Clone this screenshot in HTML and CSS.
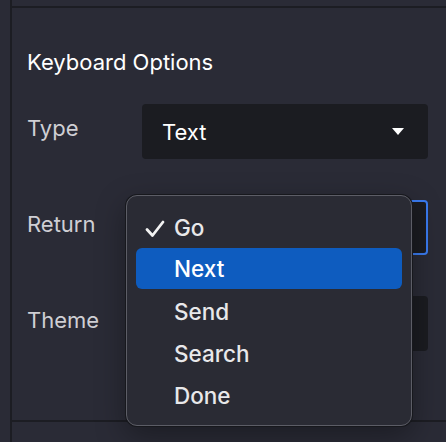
FILE: index.html
```html
<!DOCTYPE html>
<html>
<head>
<meta charset="utf-8">
<link rel="stylesheet" href="styles.css">
</head>
<body>
<div class="frame">
  <section class="panel">
    <h2 class="title">Keyboard Options</h2>
    <div class="form">
      <div class="label">Type</div>
      <div class="select">
        <span class="value">Text</span>
        <span class="caret"></span>
      </div>
      <div class="label">Return</div>
      <div class="select focused"></div>
      <div class="label">Theme</div>
      <div class="select"></div>
    </div>
  </section>
</div>
<div class="menu">
  <div class="item checked">
    <svg class="check" viewBox="0 0 20 18" width="20" height="18"><path d="M2 9.5 L7.5 15.5 L18 2" fill="none" stroke="#f2f2f2" stroke-width="2.8" stroke-linecap="round" stroke-linejoin="round"/></svg>
    <span>Go</span>
  </div>
  <div class="item active"><span>Next</span></div>
  <div class="item"><span>Send</span></div>
  <div class="item"><span>Search</span></div>
  <div class="item"><span>Done</span></div>
</div>
</body>
</html>
```
FILE: styles.css
```css
html, body {
  margin: 0;
  padding: 0;
  height: 100%;
}
body {
  background: #2a2b36;
  font-family: Inter, "Noto Sans", sans-serif;
  overflow: hidden;
  position: relative;
}
.frame {
  margin-left: 10px;
  padding-top: 6px;
  border-left: 2px solid #1c1d23;
  height: 100%;
  box-sizing: border-box;
}
.panel {
  border-top: 2px solid #1c1d23;
  border-bottom: 2px solid #1c1d23;
  height: 416px;
  box-sizing: border-box;
  padding: 0 18px 0 15px;
}
.title {
  margin: 0;
  padding-top: 40px;
  font-size: 22px;
  font-weight: 400;
  line-height: 28px;
  color: #ffffff;
}
.form {
  margin-top: 28px;
  display: grid;
  grid-template-columns: 115px 286px;
  grid-auto-rows: 55px;
  row-gap: 41px;
  align-items: center;
}
.label {
  font-size: 22px;
  color: #cfcfd4;
  padding-bottom: 8px;
}
.select {
  height: 55px;
  box-sizing: border-box;
  background: #1b1c21;
  border-radius: 4px;
  display: flex;
  align-items: center;
  justify-content: space-between;
  padding: 0 24px 0 20px;
  font-size: 22px;
  color: #ffffff;
}
.select.focused {
  border: 2px solid #3a7bef;
  padding: 0 22px 0 18px;
}
.caret {
  width: 0;
  height: 0;
  border-left: 6px solid transparent;
  border-right: 6px solid transparent;
  border-top: 7px solid #ffffff;
}
.menu {
  position: absolute;
  left: 126px;
  top: 195px;
  width: 286px;
  height: 231px;
  box-sizing: border-box;
  background: #2a2b34;
  border: 1px solid #5c5d66;
  border-radius: 11px;
  box-shadow: 0 0 0 1px #17181d, 0 10px 30px rgba(0, 0, 0, 0.35);
  padding: 10px 9px;
  display: flex;
  flex-direction: column;
}
.item {
  height: 42px;
  flex: none;
  display: flex;
  align-items: center;
  padding-left: 38px;
  font-size: 22.5px;
  font-weight: 500;
  color: #e8e8ea;
  border-radius: 6px;
  position: relative;
}
.item.active {
  background: #0e5cbf;
  color: #ffffff;
  height: 41px;
  margin-bottom: 1px;
}
.check {
  position: absolute;
  left: 9px;
  top: 14px;
}
```
